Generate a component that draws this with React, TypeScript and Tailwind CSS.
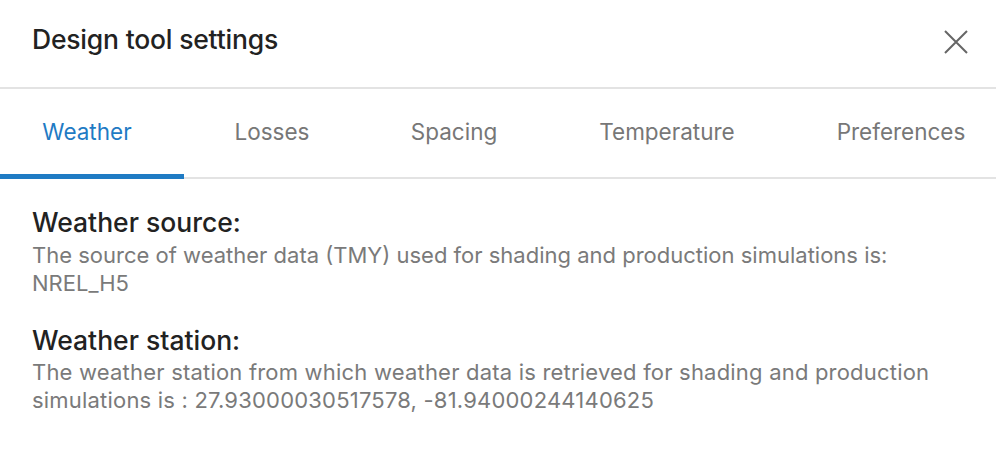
import React, { useState } from 'react';

const tabs = [
  { label: 'Weather', cls: 'w-[184px] pr-[10px]' },
  { label: 'Losses', cls: 'w-[176px]' },
  { label: 'Spacing', cls: 'w-[188px]' },
  { label: 'Temperature', cls: 'w-[238px]' },
  { label: 'Preferences', cls: 'w-[230px]' },
];

export default function App() {
  const [active, setActive] = useState('Weather');

  return (
    <div
      className="w-[996px] h-[466px] bg-white overflow-hidden"
      style={{ fontFamily: 'Inter, "Noto Sans", sans-serif' }}
    >
      {/* Header */}
      <div className="h-[89px] flex items-center justify-between pl-[32px] pr-[28px] border-b-2 border-[#e3e3e3]">
        <h1 className="text-[26.5px] font-medium text-[#222] tracking-[-0.2px] -mt-[8px]">Design tool settings</h1>
        <button className="w-[24px] h-[24px] text-[#666] -mt-[4px]">
          <svg viewBox="0 0 24 24" className="w-[24px] h-[24px]" fill="none" stroke="currentColor" strokeWidth="2">
            <path d="M1 1 L23 23 M23 1 L1 23" />
          </svg>
        </button>
      </div>

      {/* Tabs */}
      <div className="flex h-[90px] border-b-2 border-[#e3e3e3]">
        {tabs.map((t) => {
          const isActive = active === t.label;
          return (
            <button
              key={t.label}
              onClick={() => setActive(t.label)}
              className={`relative shrink-0 h-full text-center text-[22.5px] pb-[3px] ${t.cls} ${
                isActive ? 'text-[#1f7bc4]' : 'text-[#777]'
              }`}
            >
              {t.label}
              {isActive && <span className="absolute left-0 right-0 -bottom-[2px] h-[5px] bg-[#1f7bc4]" />}
            </button>
          );
        })}
      </div>

      {/* Content */}
      <div className="px-[32px] pt-[28px] flex flex-col gap-[28px]">
        <div>
          <h2 className="text-[26.5px] font-medium text-[#222] leading-[30px] mb-[4px]">Weather source:</h2>
          <p className="text-[22px] text-[#7a7a7a] leading-[28px]">
            The source of weather data (TMY) used for shading and production simulations is:
            <br />
            NREL_H5
          </p>
        </div>
        <div>
          <h2 className="text-[26.5px] font-medium text-[#222] leading-[30px] mb-[3px]">Weather station:</h2>
          <p className="text-[22px] text-[#7a7a7a] leading-[28px] w-[930px] tracking-[0.2px]">
            The weather station from which weather data is retrieved for shading and production simulations is : 27.93000030517578, -81.94000244140625
          </p>
        </div>
      </div>
    </div>
  );
}
